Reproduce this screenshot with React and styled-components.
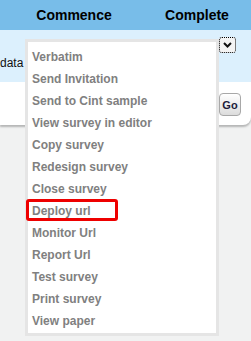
import React from 'react';
import { styled, createGlobalStyle } from 'styled-components';

const GlobalStyle = createGlobalStyle`
  body {
    margin: 0;
    background: #f1f2f2;
    font-family: 'Liberation Sans', Arial, sans-serif;
  }
`;

const actions = [
  'Verbatim',
  'Send Invitation',
  'Send to Cint sample',
  'View survey in editor',
  'Copy survey',
  'Redesign survey',
  'Close survey',
  'Deploy url',
  'Monitor Url',
  'Report Url',
  'Test survey',
  'Print survey',
  'View paper',
];

const App = () => {
  return (
    <StPage>
      <GlobalStyle />
      <StHeader>
        <StHeadCell>Commence</StHeadCell>
        <StHeadCell>Complete</StHeadCell>
      </StHeader>
      <StRow>
        <StLabel>data</StLabel>
        <StArrow>
          <svg width="9" height="6" viewBox="0 0 9 6">
            <path d="M1 1 L4.5 4.5 L8 1" fill="none" stroke="#111" strokeWidth="2" />
          </svg>
        </StArrow>
      </StRow>
      <StPanel>
        <StGo>Go</StGo>
      </StPanel>
      <StMenu>
        {actions.map((a) => (
          <StItem key={a} highlight={a === 'Deploy url' ? 1 : 0}>
            {a}
          </StItem>
        ))}
      </StMenu>
    </StPage>
  );
};

export default App;

const StPage = styled.div`
  position: relative;
  width: 251px;
  height: 341px;
  overflow: hidden;
`;

const StHeader = styled.div`
  display: flex;
  gap: 23px;
  padding-left: 24px;
  height: 30px;
  align-items: center;
  background: #78bde9;
`;

const StHeadCell = styled.div`
  width: 100px;
  text-align: center;
  font-size: 14px;
  font-weight: 700;
  color: #000;
`;

const StRow = styled.div`
  display: flex;
  justify-content: space-between;
  align-items: flex-start;
  height: 52px;
  background: #dcf0fd;
`;

const StLabel = styled.div`
  margin-top: 26px;
  font-size: 12px;
  color: #111;
`;

const StArrow = styled.div`
  margin: 7px 15px 0 0;
  width: 15px;
  height: 14px;
  border: 1px dotted #000;
  border-radius: 3px;
  display: flex;
  align-items: center;
  justify-content: center;
  background: #f4f4f4;
`;

const StPanel = styled.div`
  display: flex;
  justify-content: flex-end;
  height: 43px;
  padding: 11px 10px 0 0;
  box-sizing: border-box;
  background: #fff;
  border-bottom-right-radius: 8px;
  box-shadow: 0 2px 2px rgba(0, 0, 0, 0.25);
`;

const StGo = styled.div`
  width: 22px;
  height: 23px;
  box-sizing: border-box;
  border: 1px solid #a8a8a8;
  border-radius: 4px;
  background: linear-gradient(#ffffff, #dcdcdc);
  display: flex;
  align-items: center;
  justify-content: center;
  font-size: 11px;
  font-weight: 700;
  color: #1c1c3c;
`;

const StMenu = styled.div`
  position: absolute;
  left: 25px;
  top: 39px;
  width: 194px;
  height: 297px;
  box-sizing: border-box;
  border: 3px solid #e5e5e5;
  background: #fff;
  padding-top: 4px;
`;

const StItem = styled.div`
  position: relative;
  height: 22px;
  line-height: 22px;
  padding-left: 4px;
  font-size: 12px;
  font-weight: 700;
  color: #808080;
  white-space: nowrap;
  &::after {
    content: '';
    display: ${(props) => (props.highlight ? 'block' : 'none')};
    position: absolute;
    left: -2px;
    top: -1px;
    width: 92px;
    height: 22px;
    box-sizing: border-box;
    border: 3px solid #ee0000;
    border-radius: 3px;
  }
`;
